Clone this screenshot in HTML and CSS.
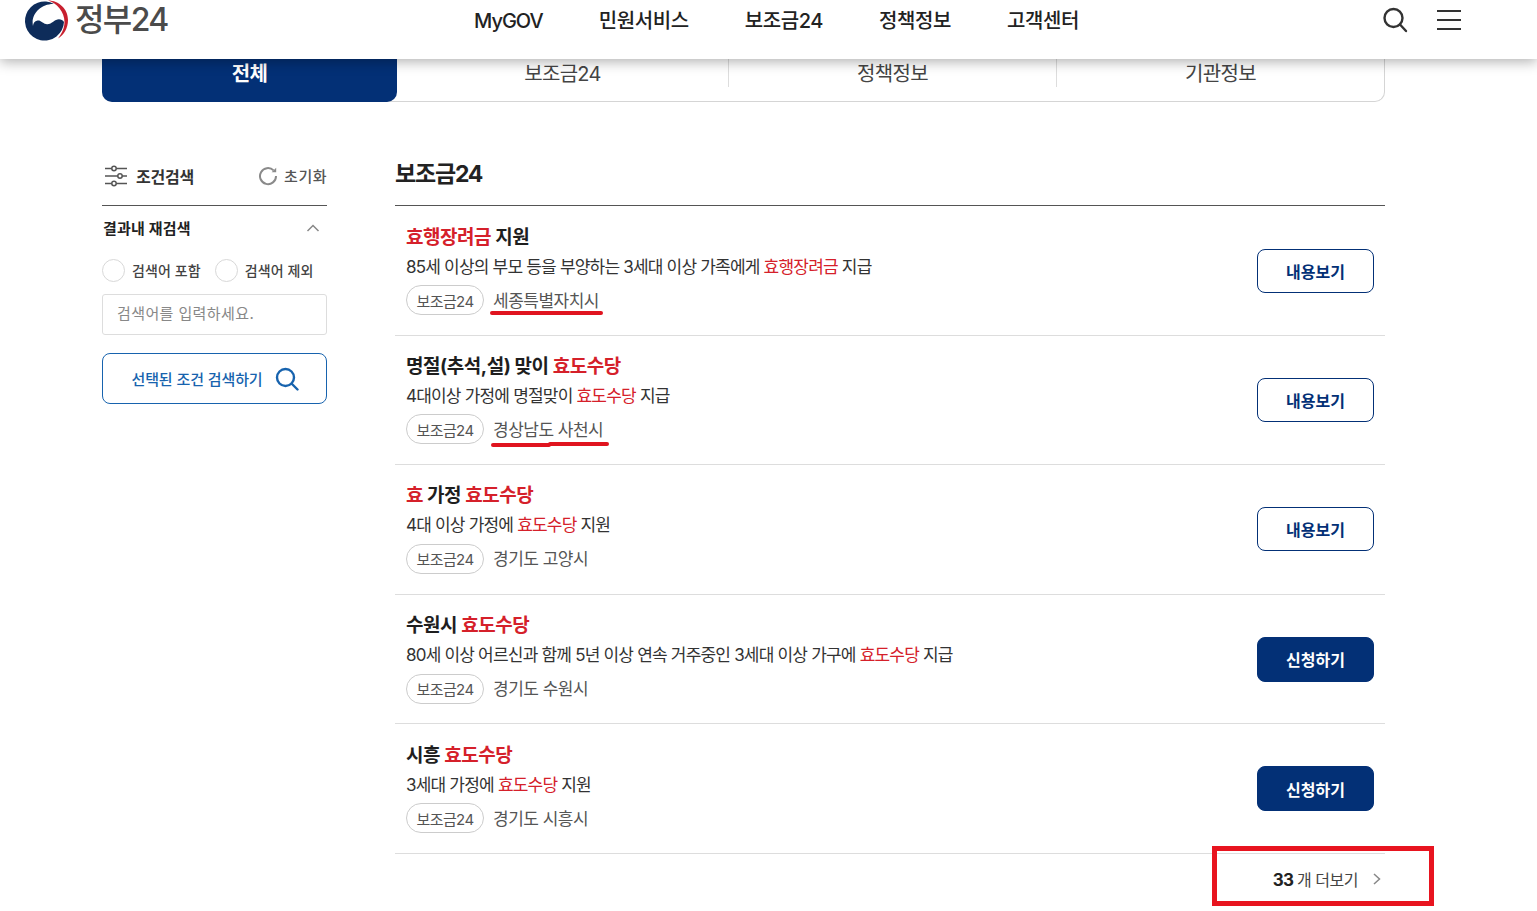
FILE: index.html
```html
<!DOCTYPE html>
<html lang="ko">
<head>
    <meta charset="UTF-8">
    <meta name="viewport" content="width=device-width, initial-scale=1.0">
    <title>정부24 통합검색</title>
    <link rel="stylesheet" href="styles.css">
</head>
<body>
    <header class="header">
        <a class="logo">
            <svg class="logo-mark" viewBox="0 0 44 41" width="44" height="41">
                <path d="M23 .5C34 .5 43 9 43 20C43 28 39 35 33 38.5C37 33 39.5 28 39.5 22C39.5 12 32 3 23 .5Z" fill="#c8202f"/>
                <path d="M29 4A19.5 19.5 0 1 0 39 22C37.5 19.5 34 18.5 31 20C27.5 21.5 25.5 25 21 24C17 23 16 20 12.5 20.5C9.5 21 8 23.5 8 26C5.5 14 16 3.5 29 4Z" fill="#0e2c5a"/>
            </svg>
            <span class="logo-text">정부24</span>
        </a>
        <nav class="gnb">
            <a>MyGOV</a>
            <a>민원서비스</a>
            <a>보조금24</a>
            <a>정책정보</a>
            <a>고객센터</a>
        </nav>
        <div class="header-icons">
            <svg viewBox="0 0 26 26" width="26" height="26" fill="none" stroke="#333" stroke-width="2.4">
                <circle cx="11.5" cy="11" r="9"/>
                <path d="M18 17.5l6 6.5" stroke-linecap="round"/>
            </svg>
            <div class="menu-icon"><span></span><span></span><span></span></div>
        </div>
    </header>

    <div class="wrap">
        <div class="tabs">
            <a class="tab tab-active">전체</a>
            <a class="tab tab-1">보조금24</a>
            <a class="tab tab-2">정책정보</a>
            <a class="tab tab-3">기관정보</a>
        </div>

        <div class="content">
            <aside class="side">
                <div class="side-head">
                    <div class="side-title">
                        <svg viewBox="0 0 24 22" width="24" height="22" fill="#fff" stroke="#555" stroke-width="1.5">
                            <path d="M1 3.5h22M1 11h22M1 18.5h22"/>
                            <circle cx="10" cy="3.5" r="2.2"/>
                            <circle cx="16" cy="11" r="2.2"/>
                            <circle cx="10" cy="18.5" r="2.2"/>
                        </svg>
                        <span>조건검색</span>
                    </div>
                    <a class="reset">
                        <svg viewBox="0 0 20 20" width="20" height="20" fill="none" stroke="#8a8a8a" stroke-width="2">
                            <path d="M15.6 4.4A8 8 0 1 0 18 10"/>
                            <path d="M13.6 6.2h4.6V1.8z" fill="#8a8a8a" stroke="none"/>
                        </svg>
                        <span>초기화</span>
                    </a>
                </div>
                <div class="side-sub">
                    <strong>결과내 재검색</strong>
                    <svg viewBox="0 0 14 8" width="14" height="8" fill="none" stroke="#888" stroke-width="1.5"><path d="M1.5 7L7 1.5 12.5 7"/></svg>
                </div>
                <div class="radios">
                    <label class="radio"><i></i>검색어 포함</label>
                    <label class="radio"><i></i>검색어 제외</label>
                </div>
                <input class="side-input" type="text" placeholder="검색어를 입력하세요.">
                <button class="side-btn">
                    <span>선택된 조건 검색하기</span>
                    <svg viewBox="0 0 24 24" width="24" height="24" fill="none" stroke="#1763ae" stroke-width="2.4">
                        <circle cx="10.5" cy="10.5" r="8.5"/>
                        <path d="M16.5 16.5l6 6" stroke-linecap="round"/>
                    </svg>
                </button>
            </aside>

            <main class="main">
                <h2 class="main-title">보조금24</h2>
                <ul class="list">
                    <li class="item">
                        <div class="item-body">
                            <h3><em>효행장려금</em> 지원</h3>
                            <p>85세 이상의 부모 등을 부양하는 3세대 이상 가족에게 <em>효행장려금</em> 지급</p>
                            <div class="meta"><span class="pill">보조금24</span><span class="region mark-a">세종특별자치시</span></div>
                        </div>
                        <a class="btn">내용보기</a>
                    </li>
                    <li class="item">
                        <div class="item-body">
                            <h3>명절(추석,설) 맞이 <em>효도수당</em></h3>
                            <p>4대이상 가정에 명절맞이 <em>효도수당</em> 지급</p>
                            <div class="meta"><span class="pill">보조금24</span><span class="region mark-b">경상남도 사천시</span></div>
                        </div>
                        <a class="btn">내용보기</a>
                    </li>
                    <li class="item">
                        <div class="item-body">
                            <h3><em>효</em> 가정 <em>효도수당</em></h3>
                            <p>4대 이상 가정에 <em>효도수당</em> 지원</p>
                            <div class="meta"><span class="pill">보조금24</span><span class="region">경기도 고양시</span></div>
                        </div>
                        <a class="btn">내용보기</a>
                    </li>
                    <li class="item">
                        <div class="item-body">
                            <h3>수원시 <em>효도수당</em></h3>
                            <p>80세 이상 어르신과 함께 5년 이상 연속 거주중인 3세대 이상 가구에 <em>효도수당</em> 지급</p>
                            <div class="meta"><span class="pill">보조금24</span><span class="region">경기도 수원시</span></div>
                        </div>
                        <a class="btn btn-fill">신청하기</a>
                    </li>
                    <li class="item">
                        <div class="item-body">
                            <h3>시흥 <em>효도수당</em></h3>
                            <p>3세대 가정에 <em>효도수당</em> 지원</p>
                            <div class="meta"><span class="pill">보조금24</span><span class="region">경기도 시흥시</span></div>
                        </div>
                        <a class="btn btn-fill">신청하기</a>
                    </li>
                </ul>
                <div class="more-row">
                    <a class="more">
                        <span><b>33</b> 개 더보기</span>
                        <svg viewBox="0 0 8 12" width="8" height="12" fill="none" stroke="#888" stroke-width="1.5"><path d="M1 1l5.5 5L1 11"/></svg>
                    </a>
                </div>
            </main>
        </div>
    </div>
</body>
</html>
```

FILE: styles.css
```css
*, *::before, *::after {
    box-sizing: border-box;
}
html, body {
    margin: 0;
    padding: 0;
}
body {
    font-family: Inter, "Noto Sans CJK KR", "Noto Sans", sans-serif;
    background: #fff;
    color: #1e1e1e;
    height: 911px;
    overflow: hidden;
}
a {
    color: inherit;
    text-decoration: none;
}
ul {
    list-style: none;
    margin: 0;
    padding: 0;
}
em {
    font-style: normal;
    color: #d5202a;
}

.header {
    position: relative;
    z-index: 2;
    display: flex;
    align-items: flex-start;
    height: 59px;
    padding-left: 25px;
    background: #fff;
    box-shadow: 0 3px 12px rgba(0,0,0,0.3);
}
.logo {
    display: flex;
    align-items: flex-start;
    width: 449px;
}
.logo-mark {
    display: block;
}
.logo-text {
    margin-left: 6px;
    font-size: 32px;
    line-height: 40px;
    font-weight: 500;
    letter-spacing: -1.6px;
    color: #4b4b4b;
}
.gnb {
    display: flex;
    gap: 56px;
    width: 908px;
    font-size: 20px;
    line-height: 42px;
    font-weight: 500;
    letter-spacing: -0.4px;
    color: #222;
}
.gnb a:first-child {
    letter-spacing: -1px;
}
.header-icons {
    display: flex;
    align-items: center;
    gap: 29px;
    height: 40px;
}
.menu-icon {
    display: flex;
    flex-direction: column;
    gap: 7px;
    width: 24px;
}
.menu-icon span {
    height: 2px;
    background: #333;
}

.wrap {
    width: 1283px;
    margin-left: 102px;
}
.tabs {
    display: flex;
    height: 43px;
    border: 1px solid #d5d5d5;
    border-top: 0;
    border-radius: 0 0 10px 10px;
    font-size: 20px;
    letter-spacing: -0.7px;
    color: #444;
}
.tab {
    display: flex;
    align-items: center;
    justify-content: center;
    height: 28px;
    padding-bottom: 2px;
}
.tab-active {
    width: 295px;
    height: 43px;
    margin: 0 0 -1px -1px;
    padding-bottom: 17px;
    background: #033076;
    border-radius: 0 0 10px 10px;
    color: #fff;
    font-weight: 700;
}
.tab-1 {
    width: 331px;
}
.tab-2 {
    width: 328px;
    border-left: 1px solid #ddd;
}
.tab-3 {
    flex: 1;
    border-left: 1px solid #ddd;
}

.content {
    display: flex;
    gap: 68px;
    padding-top: 55px;
}
.side {
    width: 225px;
    flex: none;
}
.side-head {
    display: flex;
    align-items: center;
    justify-content: space-between;
    height: 49px;
    padding: 0 0 11px 2px;
    border-bottom: 1px solid #555;
}
.side-title {
    display: flex;
    align-items: center;
    gap: 8px;
    font-size: 16px;
    font-weight: 700;
    letter-spacing: -0.2px;
    color: #333;
}
.reset {
    display: flex;
    align-items: center;
    gap: 6px;
    font-size: 15px;
    font-weight: 500;
    letter-spacing: 0.5px;
    color: #555;
}
.reset svg {
    margin-left: -2px;
}
.side-sub {
    display: flex;
    align-items: center;
    justify-content: space-between;
    height: 44px;
    padding: 0 7px 1px 1px;
    font-size: 15px;
    letter-spacing: 0.2px;
    color: #222;
}
.radios {
    display: flex;
    gap: 14px;
    margin-top: 8px;
    height: 24px;
}
.radio {
    display: flex;
    align-items: center;
    gap: 7px;
    font-size: 14px;
    font-weight: 500;
    letter-spacing: 0.1px;
    color: #444;
}
.radio i {
    width: 23px;
    height: 23px;
    border: 1px solid #d8d8d8;
    border-radius: 50%;
}
.side-input {
    display: block;
    width: 100%;
    height: 41px;
    margin-top: 12px;
    padding: 0 14px 3px;
    border: 1px solid #ddd;
    border-radius: 3px;
    font-family: inherit;
    font-size: 15px;
    letter-spacing: 0.4px;
}
.side-input::placeholder {
    color: #888;
}
.side-btn {
    display: flex;
    align-items: center;
    justify-content: center;
    gap: 12px;
    width: 100%;
    height: 51px;
    margin-top: 18px;
    padding-left: 7px;
    background: #fff;
    border: 1px solid #1763ae;
    border-radius: 8px;
    font-family: inherit;
    font-size: 15px;
    font-weight: 500;
    letter-spacing: -0.1px;
    color: #1763ae;
}

.main {
    flex: 1;
}
.main-title {
    margin: 0;
    height: 49px;
    border-bottom: 1px solid #555;
    font-size: 23px;
    line-height: 34px;
    font-weight: 700;
    letter-spacing: -1.2px;
    color: #222;
}
.item {
    display: flex;
    align-items: center;
    justify-content: space-between;
    height: 129.6px;
    padding: 0 11px;
    border-bottom: 1px solid #ddd;
}
.item:first-child {
    padding-top: 1px;
}
.item-body {
    padding: 2px 0 4.5px;
}
.item-body h3 {
    margin: 0;
    font-size: 19px;
    line-height: 28px;
    font-weight: 700;
    letter-spacing: -0.45px;
    color: #1e1e1e;
}
.item-body p {
    margin: 1px 0 0;
    font-size: 17px;
    line-height: 28px;
    letter-spacing: -0.8px;
    color: #333;
}
.meta {
    display: flex;
    align-items: center;
    gap: 9px;
    margin-top: 4.5px;
}
.pill {
    display: flex;
    align-items: center;
    justify-content: center;
    width: 78px;
    height: 30px;
    border: 1px solid #ccc;
    border-radius: 15px;
    font-size: 15px;
    letter-spacing: -0.6px;
    color: #555;
}
.region {
    position: relative;
    top: -1px;
    font-size: 17px;
    letter-spacing: -0.5px;
    color: #555;
}
/* red pen marks from the screenshot */
.mark-a::after, .mark-b::before, .mark-b::after {
    content: "";
    position: absolute;
    height: 4px;
    background: #e0141f;
    border-radius: 2px;
}
.mark-a::after {
    left: -3px;
    bottom: -3px;
    width: 113px;
}
.mark-b::before {
    left: -2px;
    bottom: -6px;
    width: 60px;
}
.mark-b::after {
    left: 55px;
    bottom: -5px;
    width: 61px;
}
.btn {
    display: flex;
    align-items: center;
    justify-content: center;
    width: 117px;
    height: 44px;
    border: 1px solid #033076;
    border-radius: 8px;
    font-size: 16px;
    font-weight: 700;
    letter-spacing: 0;
    color: #033076;
}
.btn-fill {
    height: 45px;
    background: #033076;
    color: #fff;
}
.more-row {
    position: relative;
    display: flex;
    justify-content: flex-end;
    padding: 9px 4px 0 0;
}
.more {
    display: flex;
    align-items: center;
    gap: 15px;
    height: 32px;
    font-size: 16px;
    letter-spacing: -0.5px;
    color: #444;
}
.more b {
    font-size: 17px;
    font-weight: 700;
    letter-spacing: -0.8px;
    color: #222;
}
.more-row::after {
    content: "";
    position: absolute;
    right: -49px;
    top: -8px;
    width: 222px;
    height: 60px;
    border: 5px solid #e8141f;
}
```
